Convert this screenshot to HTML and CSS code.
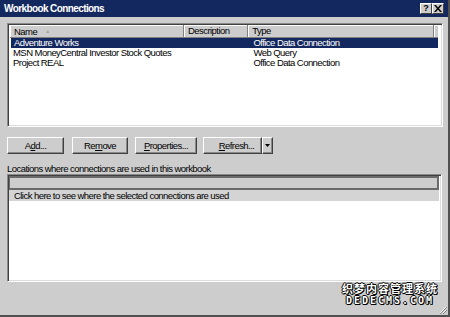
FILE: index.html
```html
<!doctype html>
<html>
<head>
<meta charset="utf-8">
<link rel="stylesheet" href="styles.css">
</head>
<body>
<div class="dialog">
	<div class="titlebar">
		<span class="title">Workbook Connections</span>
		<div class="tb-btns">
			<span class="tb-btn">?</span>
			<span class="tb-btn">
				<svg width="8" height="7" viewBox="0 0 8 7"><path d="M0 0h2l2 2.5L6 0h2L5 3.5 8 7H6L4 4.5 2 7H0l3-3.5z" fill="#000"/></svg>
			</span>
		</div>
	</div>

	<div class="body">
		<div class="listview">
			<div class="lv-head">
				<div class="hcol c-name">Name <span class="sort">&#9650;</span></div>
				<div class="hcol c-desc">Description</div>
				<div class="hcol c-type">Type</div>
				<div class="hcol c-rest"></div>
			</div>
			<div class="lv-row sel">
				<span class="c-name">Adventure Works</span>
				<span class="c-desc"></span>
				<span class="c-type">Office Data Connection</span>
			</div>
			<div class="lv-row">
				<span class="c-name">MSN MoneyCentral Investor Stock Quotes</span>
				<span class="c-desc"></span>
				<span class="c-type">Web Query</span>
			</div>
			<div class="lv-row">
				<span class="c-name">Project REAL</span>
				<span class="c-desc"></span>
				<span class="c-type">Office Data Connection</span>
			</div>
		</div>

		<div class="buttons">
			<button class="btn b-add">A<u>d</u>d...</button>
			<button class="btn b-remove">Re<u>m</u>ove</button>
			<button class="btn b-props"><u>P</u>roperties...</button>
			<div class="split">
				<button class="btn b-refresh"><u>R</u>efresh...</button>
				<button class="btn b-drop"><svg width="5" height="3" viewBox="0 0 5 3"><path d="M0 0h5L2.5 3z" fill="#000"/></svg></button>
			</div>
		</div>

		<div class="label">Locations where connections are used in this workbook</div>

		<div class="locbox">
			<div class="loc-head"></div>
			<div class="loc-row">Click here to see where the selected connections are used</div>
		</div>
	</div>

	<div class="watermark">
		<div class="wm-cn">织梦内容管理系统</div>
		<div class="wm-en">DEDECMS.COM</div>
	</div>
	<svg class="grip" width="8" height="8" viewBox="0 0 8 8">
		<path d="M7 1L1 7M7 4L4 7" stroke="#fff" stroke-width="1"/>
		<path d="M8 1L1 8M8 4L4 8" stroke="#808080" stroke-width="1"/>
	</svg>
</div>
</body>
</html>
```

FILE: styles.css
```css
*{
	margin:0; padding:0; box-sizing:border-box;
}
body{
	width:450px; height:317px; overflow:hidden;
	font-family:"Liberation Sans", Arial, sans-serif; font-size:9.5px; letter-spacing:-0.55px; color:#000;
	background:#cdcdcd;
}
.dialog{
	width:450px; height:317px; position:relative;
	background:#cdcdcd;
	border-right:2px solid #505050; border-bottom:2px solid #505050;
	display:flex; flex-direction:column;
}

/* title bar */
.titlebar{
	height:17px; background:#13285e;
	display:flex; align-items:center; justify-content:space-between;
	padding:0 4px 0 4px;
}
	.title{
		color:#fff; font-weight:bold; font-size:10px; letter-spacing:-0.6px;
	}
	.tb-btns{
		display:flex;
	}
	.tb-btn{
		width:12px; height:11px; background:#cdcdcd;
		border:1px solid; border-color:#fff #404040 #404040 #fff;
		display:flex; align-items:center; justify-content:center;
		font-weight:bold; font-size:9px; line-height:1; letter-spacing:0;
	}

.body{
	padding:6px 5px 0 7px;
	display:flex; flex-direction:column;
}

/* connections list */
.listview{
	height:104px; background:#fff;
	border:1px solid; border-color:#8a8a8a #fff #fff #8a8a8a;
	box-shadow:inset 1px 1px 0 #404040, inset -1px -1px 0 #dcdcdc;
	padding:1px 4px 0 2px;
}
	.lv-head{
		display:flex; height:13px;
	}
		.hcol{
			background:#cdcdcd; height:13px; line-height:12px;
			border-right:1px solid #808080; border-bottom:1px solid #808080;
			box-shadow:inset 1px 1px 0 #fff;
			padding-left:4px; white-space:nowrap;
		}
		.hcol.c-name{ width:176px; }
		.hcol.c-desc{ width:65px; }
		.hcol.c-type{ width:188px; }
		.hcol.c-rest{ flex:1; border-right:none; }
		.sort{
			color:#a0a0a0; font-size:5px; margin-left:6px; vertical-align:2px;
		}
	.lv-row{
		display:flex; height:10px; line-height:10px; white-space:nowrap;
	}
		.lv-row span{ padding-left:3px; }
		.lv-row .c-name{ width:176px; }
		.lv-row .c-desc{ width:65px; }
		.lv-row .c-type{ width:188px; }
	.lv-row.sel{
		background:#13285e; color:#fff; margin-left:1px;
	}
	.lv-row.sel .c-name{ width:175px; }

/* buttons */
.buttons{
	display:flex; margin-top:10px; height:17px;
}
	.btn{
		height:17px; background:#cdcdcd; font:inherit; letter-spacing:inherit; color:#000;
		border:1px solid; border-color:#fff #404040 #404040 #fff;
		box-shadow:inset -1px -1px 0 #8a8a8a;
		display:flex; align-items:center; justify-content:center;
	}
	.b-add{ width:57px; }
	.b-remove{ width:56px; margin-left:8px; }
	.b-props{ width:62px; margin-left:7px; }
	.split{ display:flex; margin-left:6px; }
	.b-refresh{ width:59px; padding-left:8px; }
	.b-drop{ width:11px; }

.label{
	margin-top:9px; height:11px; line-height:11px;
}

/* locations list */
.locbox{
	height:108px; background:#fff; margin-right:1px;
	border:1px solid; border-color:#8a8a8a #fff #fff #8a8a8a;
	box-shadow:inset 1px 1px 0 #404040, inset -1px -1px 0 #dcdcdc;
	padding:1px 2px 0 1px;
}
	.loc-head{
		height:14px; background:#cdcdcd;
		border:2px solid #6a6a6a; border-left-width:1px;
	}
	.loc-row{
		height:11px; line-height:11px; background:#d4d4d4;
		padding-left:5px; white-space:nowrap;
	}

/* overlay bits */
.watermark{
	position:absolute; right:10px; top:281px;
	color:#fff; font-weight:bold; text-align:center; letter-spacing:0;
	text-shadow:-1px 0 #000, 1px 0 #000, 0 -1px #000, 0 1px #000, 1px 1px #000;
}
	.wm-cn{
		font-family:"Noto Sans CJK SC", sans-serif; font-size:11px; line-height:14px; letter-spacing:1px;
	}
	.wm-en{
		font-family:"DejaVu Sans Mono", monospace; font-size:10px; line-height:12px; letter-spacing:2px;
	}
.grip{
	position:absolute; right:1px; bottom:1px;
}
```
